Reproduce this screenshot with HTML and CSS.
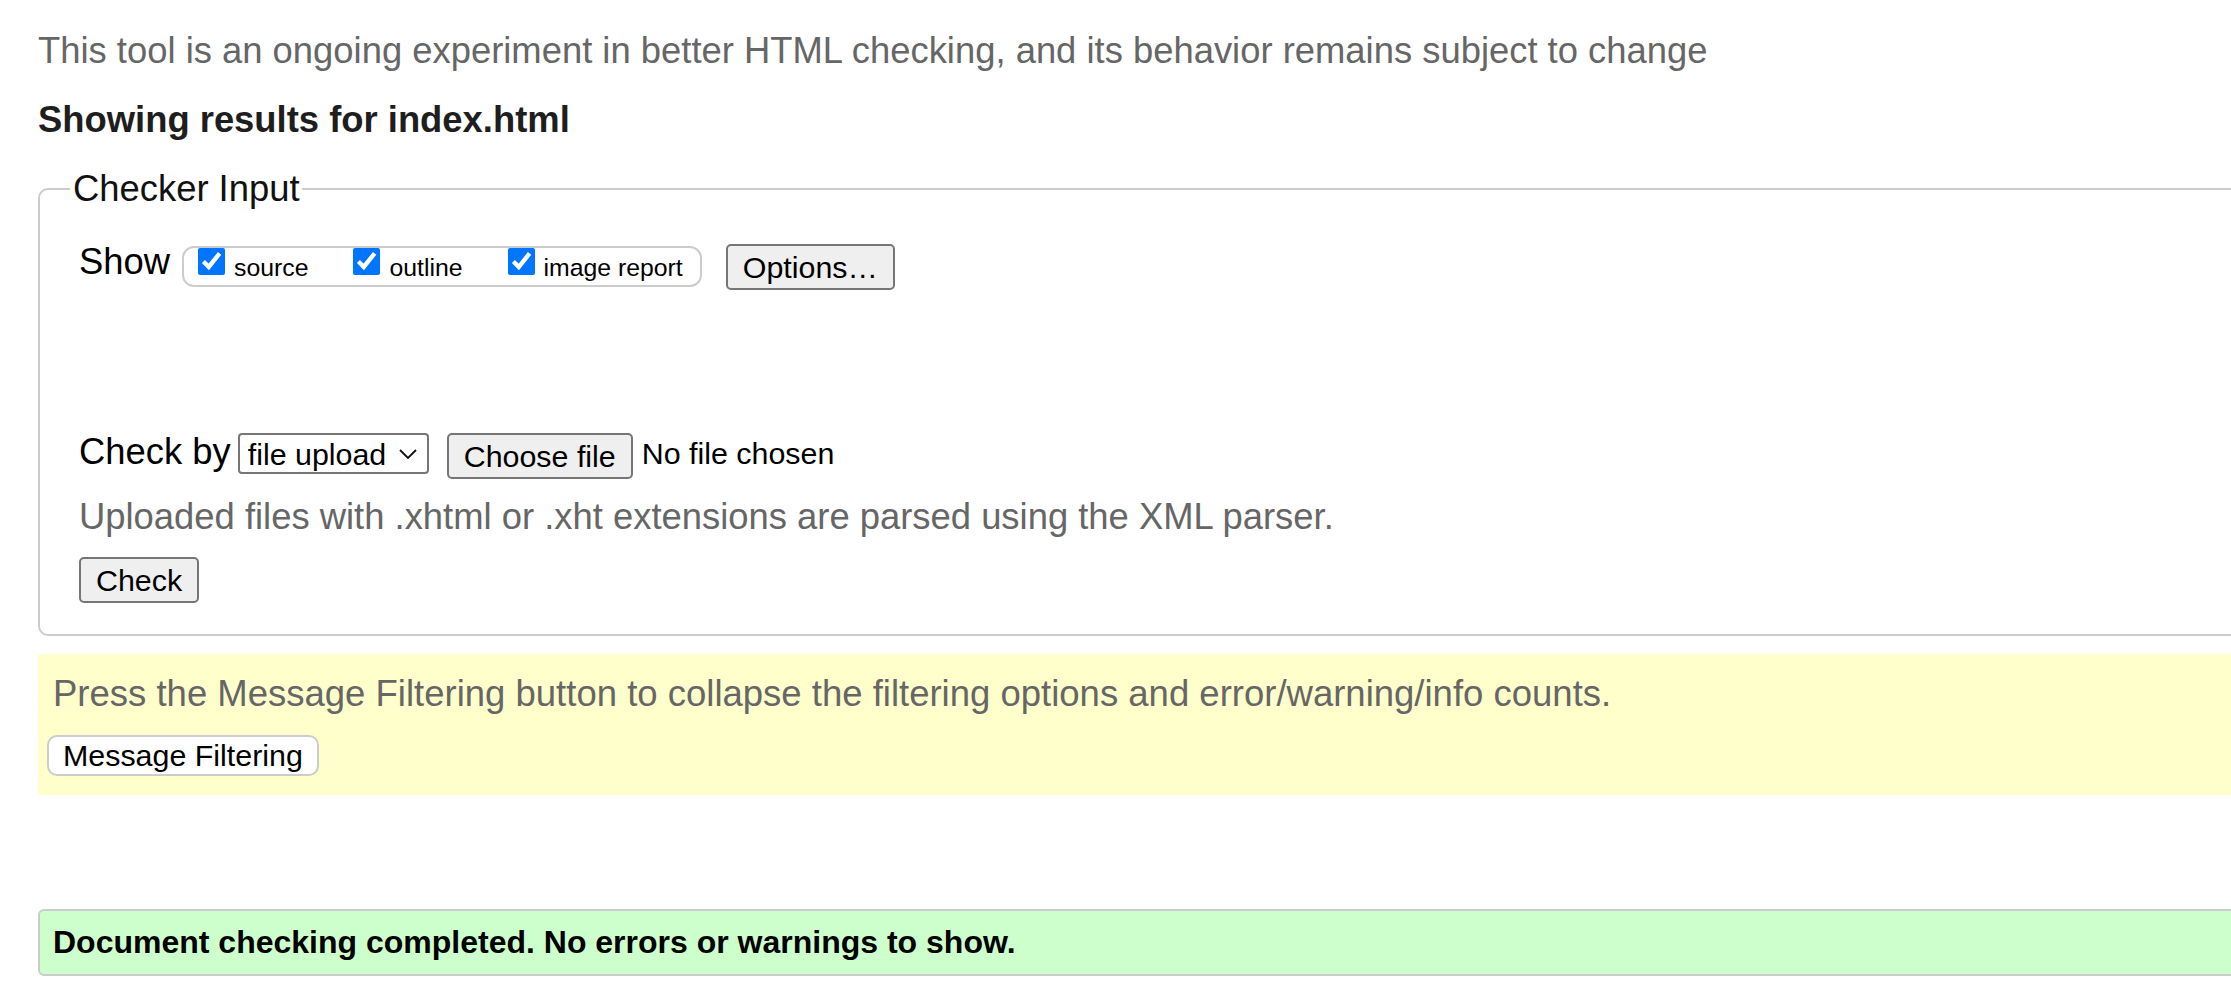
FILE: index.html
```html
<!DOCTYPE html>
<html lang="en">
<head>
<meta charset="utf-8">
<title>Nu Html Checker</title>
<link rel="stylesheet" href="styles.css">
</head>
<body>
<div class="page">
  <p class="intro">This tool is an ongoing experiment in better HTML checking, and its behavior remains subject to change</p>
  <h2 class="results-title">Showing results for index.html</h2>
  <fieldset class="checker">
    <legend class="checker-legend">Checker Input</legend>
    <div class="show-row">
      <span class="show-label">Show</span>
      <div class="show-options">
        <label class="show-opt"><input type="checkbox" class="cb" checked><span class="opt-text">source</span></label>
        <label class="show-opt"><input type="checkbox" class="cb" checked><span class="opt-text">outline</span></label>
        <label class="show-opt"><input type="checkbox" class="cb" checked><span class="opt-text">image report</span></label>
      </div>
      <button class="btn options-btn" type="button">Options…</button>
    </div>
    <div class="checkby-row">
      <span class="checkby-label">Check by</span>
      <span class="select-wrap">
        <select class="select"><option>file upload</option></select>
        <svg class="chev" width="18" height="10" viewBox="0 0 18 10" aria-hidden="true"><path d="M1 1 L9 9 L17 1" fill="none" stroke="#111" stroke-width="1.8"/></svg>
      </span>
      <button class="btn file-btn" type="button">Choose file</button>
      <span class="file-status">No file chosen</span>
    </div>
    <p class="upload-note">Uploaded files with .xhtml or .xht extensions are parsed using the XML parser.</p>
    <button class="btn check-btn" type="button">Check</button>
  </fieldset>
  <div class="filters">
    <p class="filters-text">Press the Message Filtering button to collapse the filtering options and error/warning/info counts.</p>
    <button class="filter-btn" type="button">Message Filtering</button>
  </div>
  <p class="success">Document checking completed. No errors or warnings to show.</p>
</div>
</body>
</html>
```
FILE: styles.css
```css
html {
  overflow: hidden;
}

body {
  margin: 0;
  padding: 30px 0 0 38px;
  font-family: "Liberation Sans", Arial, sans-serif;
  color: #000;
  background: #fff;
}

.page {
  width: 2300px;
}

.intro {
  margin: 0;
  font-size: 36.4px;
  line-height: 41px;
  color: #666;
}

.results-title {
  margin: 28px 0 0;
  font-size: 36.4px;
  line-height: 41px;
  font-weight: bold;
  color: #1e1e1e;
}

.checker {
  margin: 28px 0 0;
  padding: 35px 0 31px 39px;
  border: 2px solid #cccccc;
  border-radius: 10px;
  min-width: 0;
}

.checker-legend {
  font-size: 36.4px;
  line-height: 41px;
  padding: 0 2px 0 3px;
  margin-left: -9px;
  color: #111;
}

.show-row {
  display: flex;
  align-items: flex-start;
}

.show-label {
  font-size: 36.4px;
  line-height: 35px;
  margin-right: 12px;
}

.show-options {
  display: flex;
  gap: 45px;
  margin-top: 2px;
  height: 41px;
  box-sizing: border-box;
  border: 2px solid #cccccc;
  border-radius: 12px;
  padding: 0 17px 0 14px;
}

.show-opt {
  display: flex;
  align-items: flex-start;
  font-size: 24.8px;
}

.cb {
  width: 27px;
  height: 27px;
  margin: 0 9px 0 0;
  accent-color: #0075ff;
}

.opt-text {
  line-height: 28px;
  margin-top: 6px;
}

.btn {
  font-family: inherit;
  font-size: 30.4px;
  height: 46px;
  padding: 0 15px;
  border: 2px solid #767676;
  border-radius: 5px;
  background: #efefef;
  color: #000;
}

.options-btn {
  margin-left: 24px;
}

.checkby-row {
  display: flex;
  align-items: flex-start;
  margin-top: 143px;
}

.checkby-label {
  font-size: 36.4px;
  line-height: 37px;
  margin-right: 7px;
}

.select-wrap {
  position: relative;
  display: inline-flex;
  width: 191px;
  height: 41px;
}

.select {
  appearance: none;
  -webkit-appearance: none;
  width: 100%;
  height: 41px;
  box-sizing: border-box;
  border: 2px solid #767676;
  border-radius: 4px;
  background: #fff;
  font-family: inherit;
  font-size: 30.4px;
  color: #000;
  padding: 0 0 0 8px;
  margin: 0;
}

.chev {
  position: absolute;
  right: 12px;
  top: 16px;
  pointer-events: none;
}

.file-btn {
  margin-left: 18px;
}

.file-status {
  margin-left: 9px;
  font-size: 30.4px;
  line-height: 41px;
}

.upload-note {
  margin: 17px 0 0;
  font-size: 36.4px;
  line-height: 41px;
  color: #666;
}

.check-btn {
  display: block;
  margin-top: 20px;
}

.filters {
  margin-top: 18px;
  background: #ffffcc;
  padding: 19px 0 19px 9px;
}

.filters-text {
  margin: 0 0 21px 6px;
  font-size: 36.5px;
  line-height: 41px;
  color: #666;
}

.filter-btn {
  font-family: inherit;
  font-size: 30.4px;
  height: 41px;
  padding: 0 14px;
  border: 2px solid #cccccc;
  border-radius: 10px;
  background: #fff;
  color: #000;
}

.success {
  margin: 114px 0 0;
  background: #ccffcc;
  border: 2px solid #cccccc;
  border-radius: 6px;
  padding: 13px 0 13px 13px;
  font-size: 32px;
  line-height: 37px;
  font-weight: bold;
}
```
